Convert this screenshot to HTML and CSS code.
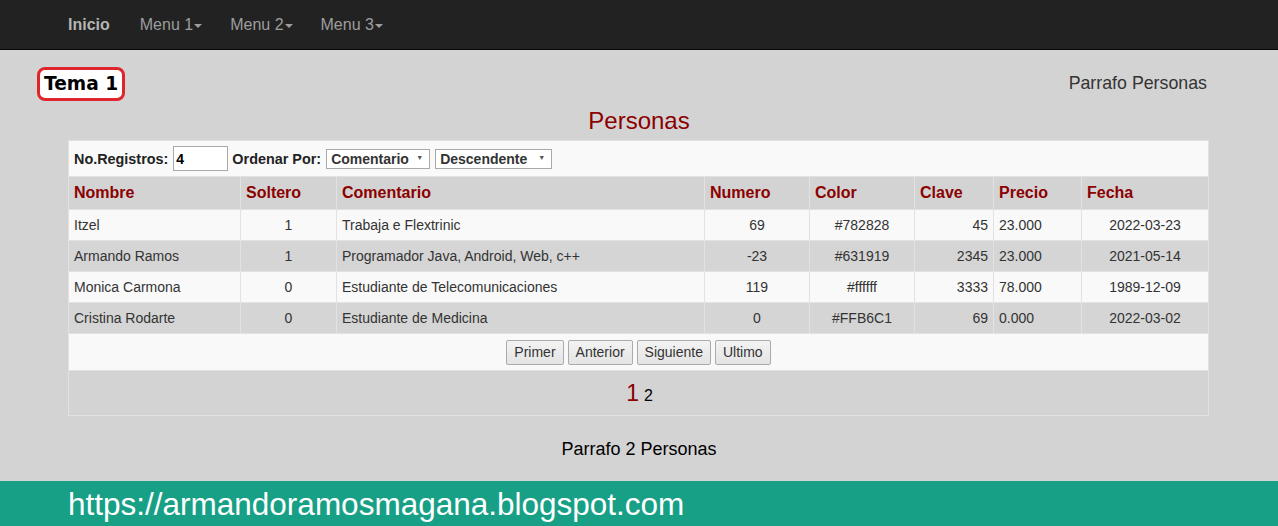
FILE: index.html
```html
<!DOCTYPE html>
<html lang="es">
<head>
<meta charset="utf-8">
<title>Personas</title>
<link rel="stylesheet" href="styles.css">
</head>
<body>
<nav class="navbar">
  <a class="brand" href="#">Inicio</a>
  <a class="nav-item" href="#">Menu 1<span class="caret"></span></a>
  <a class="nav-item" href="#">Menu 2<span class="caret"></span></a>
  <a class="nav-item" href="#">Menu 3<span class="caret"></span></a>
</nav>

<main class="page">
  <div class="top-row">
    <span class="tema">Tema 1</span>
    <span class="parrafo">Parrafo Personas</span>
  </div>

  <h2 class="title">Personas</h2>

  <div class="table-wrap">
    <table class="grid">
      <colgroup>
        <col class="c-nombre">
        <col class="c-soltero">
        <col class="c-comentario">
        <col class="c-numero">
        <col class="c-color">
        <col class="c-clave">
        <col class="c-precio">
        <col class="c-fecha">
      </colgroup>
      <tr class="row-controls">
        <td colspan="8">
          <div class="controls">
            <label class="ctl-label">No.Registros:</label>
            <input class="ctl-input" type="text" value="4">
            <label class="ctl-label ctl-gap">Ordenar Por:</label>
            <span class="sel sel-1"><select><option>Comentario</option></select></span>
            <span class="sel sel-2"><select><option>Descendente</option></select></span>
          </div>
        </td>
      </tr>
      <tr class="row-head">
        <th>Nombre</th>
        <th>Soltero</th>
        <th>Comentario</th>
        <th>Numero</th>
        <th>Color</th>
        <th>Clave</th>
        <th>Precio</th>
        <th>Fecha</th>
      </tr>
      <tr class="row-data odd">
        <td>Itzel</td><td class="center">1</td><td>Trabaja e Flextrinic</td><td class="center">69</td><td class="center">#782828</td><td class="right">45</td><td>23.000</td><td class="center">2022-03-23</td>
      </tr>
      <tr class="row-data even">
        <td>Armando Ramos</td><td class="center">1</td><td>Programador Java, Android, Web, c++</td><td class="center">-23</td><td class="center">#631919</td><td class="right">2345</td><td>23.000</td><td class="center">2021-05-14</td>
      </tr>
      <tr class="row-data odd">
        <td>Monica Carmona</td><td class="center">0</td><td>Estudiante de Telecomunicaciones</td><td class="center">119</td><td class="center">#ffffff</td><td class="right">3333</td><td>78.000</td><td class="center">1989-12-09</td>
      </tr>
      <tr class="row-data even">
        <td>Cristina Rodarte</td><td class="center">0</td><td>Estudiante de Medicina</td><td class="center">0</td><td class="center">#FFB6C1</td><td class="right">69</td><td>0.000</td><td class="center">2022-03-02</td>
      </tr>
      <tr class="row-buttons">
        <td colspan="8">
          <div class="buttons">
            <button class="btn">Primer</button>
            <button class="btn">Anterior</button>
            <button class="btn">Siguiente</button>
            <button class="btn">Ultimo</button>
          </div>
        </td>
      </tr>
      <tr class="row-pages">
        <td colspan="8">
          <div class="pages"><span class="pg-current">1</span><span class="pg">2</span></div>
        </td>
      </tr>
    </table>
  </div>

  <p class="parrafo2">Parrafo 2 Personas</p>
</main>

<footer class="footer">https://armandoramosmagana.blogspot.com</footer>
</body>
</html>
```

FILE: styles.css
```css
html, body {
  margin: 0;
  padding: 0;
}

body {
  background: #d3d3d3;
  font-family: "Liberation Sans", Arial, sans-serif;
  color: #333;
  overflow: hidden;
}

/* Navbar */
.navbar {
  display: flex;
  align-items: flex-start;
  height: 49px;
  background: #222;
  border-bottom: 1px solid #080808;
  padding-left: 68px;
  box-sizing: content-box;
}

.navbar a {
  text-decoration: none;
  font-size: 16px;
  line-height: 20px;
  padding: 15px 15px 14px;
  color: #9d9d9d;
}

.navbar .brand {
  padding-left: 0;
  font-weight: bold;
  color: #b4b4b4;
}

.caret {
  display: inline-block;
  width: 0;
  height: 0;
  margin-left: 1px;
  vertical-align: middle;
  border-top: 4px solid #9d9d9d;
  border-left: 4px solid transparent;
  border-right: 4px solid transparent;
}

.nav-item { margin-right: -2px; }

/* Page */
.page {
  display: flex;
  flex-direction: column;
}

.top-row {
  display: flex;
  justify-content: space-between;
  align-items: center;
  margin-top: 17px;
  padding-left: 37px;
  padding-right: 71px;
}

.tema {
  display: inline-block;
  height: 28px;
  line-height: 28px;
  padding: 0 4px;
  border: 3px solid #e0242c;
  border-radius: 8px;
  background: #fff;
  font-family: "DejaVu Sans", Verdana, sans-serif;
  font-weight: bold;
  font-size: 18.6px;
  color: #000;
}

.parrafo {
  font-size: 17.8px;
  color: #333;
  margin-top: -2px;
}

.title {
  margin: 6px 0 5px;
  text-align: center;
  font-weight: normal;
  font-size: 24px;
  line-height: 28px;
  color: #8b0000;
}

/* Table */
.table-wrap {
  padding-left: 68px;
}

.grid {
  width: 1140px;
  table-layout: fixed;
  border-collapse: collapse;
  border: 1px solid #e2e2e2;
}

.c-nombre { width: 172px; }
.c-soltero { width: 96px; }
.c-comentario { width: 368px; }
.c-numero { width: 105px; }
.c-color { width: 105px; }
.c-clave { width: 79px; }
.c-precio { width: 88px; }
.c-fecha { width: 127px; }

.grid td, .grid th {
  border: 1px solid #e2e2e2;
  padding: 0 5px;
  font-size: 14px;
  color: #333;
  text-align: left;
  white-space: nowrap;
  overflow: hidden;
}

.grid th {
  font-size: 16px;
  font-weight: bold;
  color: #8b0000;
}

.row-controls { background: #f9f9f9; height: 36px; }
.row-head { background: #d3d3d3; height: 33px; }
.row-data { height: 31px; }
.row-data.odd { background: #f9f9f9; }
.row-data.even { background: #d5d5d5; }
.row-buttons { background: #f9f9f9; height: 37px; }
.row-pages { background: #d3d3d3; height: 45px; }

.center { text-align: center !important; }
.right { text-align: right !important; }

.controls {
  display: flex;
  align-items: center;
}

.ctl-label {
  font-size: 14.4px;
  font-weight: bold;
  color: #222;
}

.ctl-gap { margin-left: 4px; }

.ctl-input {
  width: 55px;
  height: 25px;
  box-sizing: border-box;
  margin: 0 0 0 5px;
  padding: 0 2px;
  border: 1px solid #a9a9a9;
  background: #fff;
  font-family: "Liberation Sans", Arial, sans-serif;
  font-size: 14px;
  font-weight: bold;
  color: #000;
}

.sel {
  position: relative;
  display: inline-block;
  margin-left: 5px;
}

.sel-1 { margin-left: 5px; }

.sel select {
  -webkit-appearance: none;
  appearance: none;
  height: 20px;
  box-sizing: border-box;
  margin: 0;
  padding: 0 4px;
  border: 1px solid #a9a9a9;
  border-radius: 0;
  background: #fff;
  font-family: "Liberation Sans", Arial, sans-serif;
  font-size: 14px;
  font-weight: bold;
  color: #333;
}

.sel-1 select { width: 104px; }
.sel-2 select { width: 117px; }

.sel::after {
  content: "\25BC";
  position: absolute;
  right: 7px;
  top: 5px;
  font-size: 7px;
  color: #555;
  pointer-events: none;
}

.buttons {
  display: flex;
  justify-content: center;
  gap: 4px;
}

.btn {
  height: 25px;
  padding: 0 7px;
  border: 1px solid #ababab;
  border-radius: 2px;
  background: linear-gradient(#f3f3f3, #e4e4e4);
  font-family: "Liberation Sans", Arial, sans-serif;
  font-size: 14px;
  color: #333;
}

.pages {
  display: flex;
  justify-content: center;
  align-items: baseline;
  gap: 5px;
  padding-left: 2px;
}

.pg-current {
  font-size: 23px;
  color: #8b0000;
}

.pg {
  font-size: 16px;
  color: #000;
}

.parrafo2 {
  margin: 23px 0 0;
  text-align: center;
  font-size: 18px;
  line-height: 20px;
  color: #000;
  height: 42px;
}

.footer {
  height: 40px;
  padding: 5px 0 0 68px;
  background: #17a086;
  color: #fff;
  font-size: 31.5px;
  line-height: 36px;
}
```
